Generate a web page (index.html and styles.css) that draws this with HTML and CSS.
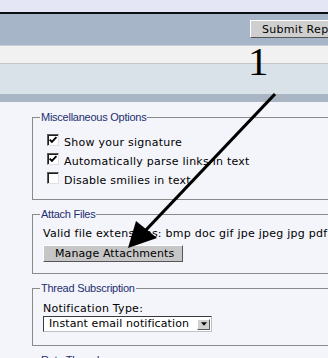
FILE: index.html
```html
<!DOCTYPE html>
<html lang="en">
<head>
    <meta charset="UTF-8">
    <title>Post Reply</title>
    <link rel="stylesheet" href="styles.css">
</head>
<body>
    <div class="page">
        <div class="top-strip"></div>
        <div class="toolbar">
            <button class="win-btn submit-btn">Submit Reply</button>
        </div>
        <div class="band-light"></div>
        <div class="band-blue"></div>
        <div class="band-dark"></div>

        <div class="content">
            <fieldset class="group misc">
                <legend>Miscellaneous Options</legend>
                <label class="opt"><span class="box"><svg viewBox="0 0 9 9"><path d="M1.5 4.2 L3.5 6.3 L7.6 2" /></svg></span>Show your signature</label>
                <label class="opt"><span class="box"><svg viewBox="0 0 9 9"><path d="M1.5 4.2 L3.5 6.3 L7.6 2" /></svg></span>Automatically parse links in text</label>
                <label class="opt"><span class="box"></span>Disable smilies in text</label>
            </fieldset>

            <fieldset class="group attach">
                <legend>Attach Files</legend>
                <p class="line">Valid file extensions: bmp doc gif jpe jpeg jpg pdf png psd txt zip</p>
                <button class="win-btn manage-btn">Manage Attachments</button>
            </fieldset>

            <fieldset class="group subscribe">
                <legend>Thread Subscription</legend>
                <p class="line">Notification Type:</p>
                <div class="select">
                    <span class="select-text">Instant email notification</span>
                    <span class="select-arrow"><svg viewBox="0 0 7 4"><path d="M0 0 H7 L3.5 4 Z" /></svg></span>
                </div>
            </fieldset>

            <fieldset class="group rate">
                <legend>Rate Thread</legend>
            </fieldset>
        </div>

        <!-- annotation drawn over the screenshot -->
        <div class="callout">1</div>
        <svg class="arrow" width="328" height="358" viewBox="0 0 328 358">
            <line x1="275" y1="94" x2="145" y2="231" />
            <polygon points="128,248 136,221 157,238" />
        </svg>
    </div>
</body>
</html>
```

FILE: styles.css
```css
html, body {
    margin: 0;
    overflow: hidden;
}

body {
    background-color: #f4f5fb;
    font-family: "DejaVu Sans", Verdana, sans-serif;
    font-size: 11px;
    color: #000;
}

.page {
    position: relative;
    width: 328px;
    height: 358px;
    overflow: hidden;
}

.top-strip {
    height: 12px;
    background-color: #e4e6f5;
}

.toolbar {
    height: 25px;
    border-top: 2px solid #0b0b12;
    background-color: #a6b6c8;
    padding: 6px 0 0 250px;
    white-space: nowrap;
}

.band-light {
    height: 17px;
    border-top: 1px solid #c9ced6;
    border-bottom: 1px solid #c4c6c9;
    background-color: #f1f1f1;
}

.band-blue {
    height: 30px;
    background-color: #d9e1e9;
}

.band-dark {
    height: 8px;
    background-color: #a9b5c3;
}

/* windows style raised buttons */
.win-btn {
    font-family: "DejaVu Sans", Verdana, sans-serif;
    font-size: 11px;
    letter-spacing: 0.3px;
    color: #000;
    background-color: #cfcfcf;
    border: 1px solid;
    border-color: #fff #555 #555 #fff;
    margin: 0;
    white-space: nowrap;
    text-align: left;
}

.submit-btn {
    height: 18px;
    padding: 0 0 0 11px;
    width: 100px;
}

.content {
    padding: 9px 0 0 32px;
    width: 460px;
    letter-spacing: 0.25px;
}

.group {
    margin: 0 0 8px;
    border: 1px solid #8a8a8a;
    padding: 0 10px;
    min-width: 0;
}

.group legend {
    font-family: "Liberation Sans", Arial, sans-serif;
    font-size: 11px;
    line-height: 13px;
    letter-spacing: -0.25px;
    color: #232e70;
    padding: 0 1px;
    margin-left: -3px;
}

.misc {
    padding-top: 9px;
    padding-bottom: 9px;
}

.opt {
    display: flex;
    align-items: center;
    height: 19px;
    line-height: 19px;
    padding-left: 4px;
}

.box {
    width: 10px;
    height: 10px;
    margin-right: 5px;
    margin-top: -5px;
    background-color: #fff;
    border: 1px solid;
    border-color: #5a5a5a #e0e0e0 #e0e0e0 #5a5a5a;
    box-shadow: inset 1px 1px 0 #1e1e1e;
    display: flex;
}

.box svg {
    width: 10px;
    height: 10px;
}

.box path {
    fill: none;
    stroke: #000;
    stroke-width: 1.7;
}

.line {
    margin: 0;
    line-height: 14px;
    white-space: nowrap;
}

.attach {
    padding-top: 6px;
    padding-bottom: 11px;
}

.manage-btn {
    display: block;
    margin-top: 4px;
    width: 140px;
    height: 17px;
    padding: 0 0 0 11px;
    letter-spacing: 0.1px;
    background-color: #c6c6c6;
}

.subscribe {
    padding-top: 7px;
    padding-bottom: 13px;
}

.select {
    display: flex;
    align-items: center;
    justify-content: space-between;
    width: 167px;
    height: 14px;
    background-color: #fff;
    border: 1px solid;
    border-color: #3a3a3a #c0c0c0 #c0c0c0 #3a3a3a;
}

.select-text {
    padding-left: 5px;
    line-height: 14px;
    letter-spacing: 0.1px;
}

.select-arrow {
    display: flex;
    align-items: center;
    justify-content: center;
    width: 11px;
    height: 9px;
    margin-right: 1px;
    background-color: #d0d0d0;
    border: 1px solid;
    border-color: #fff #555 #555 #fff;
}

.select-arrow svg {
    width: 6px;
    height: 4px;
}

.rate {
    height: 20px;
}

.callout {
    position: absolute;
    left: 248px;
    top: 41px;
    font-family: "Liberation Serif", "Times New Roman", serif;
    font-size: 41px;
    line-height: 41px;
    color: #000;
}

.arrow {
    position: absolute;
    left: 0;
    top: 0;
}

.arrow line {
    stroke: #000;
    stroke-width: 3.2;
}

.arrow polygon {
    fill: #000;
}
```
